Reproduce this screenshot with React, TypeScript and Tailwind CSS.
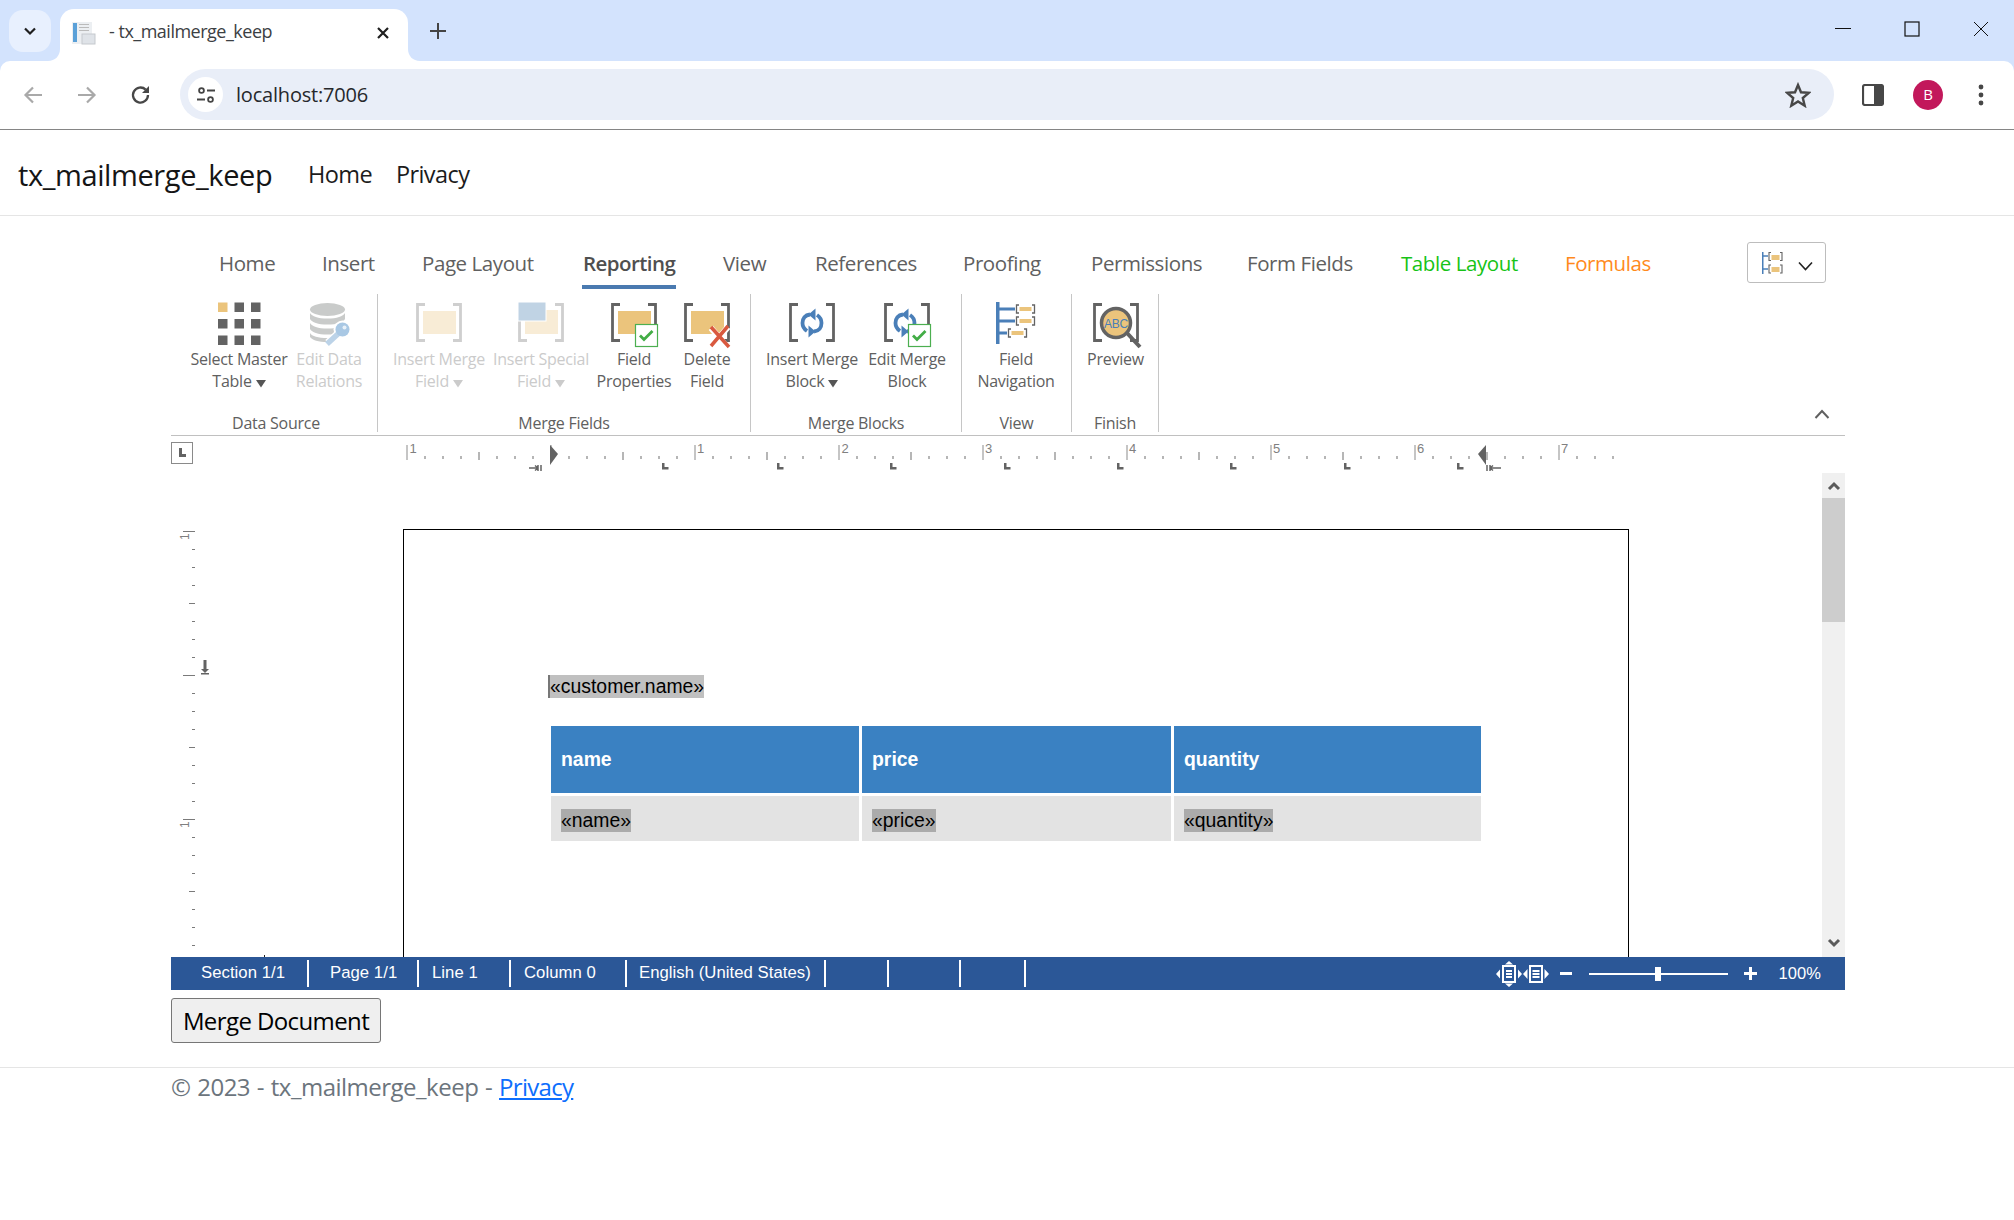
import React from "react";

const G = "#636363";
const O = "#ebc47c";
const B = "#4a7fb8";

function Brackets({ c = G, x1 = 7, x2 = 53 }: { c?: string; x1?: number; x2?: number }) {
  return (
    <g fill="none" stroke={c} strokeWidth="2.800">
      <path d={`M${x1 + 9} 2.500H${x1 + 1.500}V38.500H${x1 + 9}`} />
      <path d={`M${x2 - 9} 2.500H${x2 - 1.500}V38.500H${x2 - 9}`} />
    </g>
  );
}
function Check() {
  return (
    <g>
      <rect x="31.500" y="22.500" width="22" height="22" fill="#fff" stroke="#4caf50" strokeWidth="1.200" />
      <path d="M36 33.500l4 4 8.500-8.500" fill="none" stroke="#43ad46" strokeWidth="2.800" />
    </g>
  );
}
function Arrows({ cx = 30, cy = 21 }: { cx?: number; cy?: number }) {
  const half = (
    <g>
      <path d="M-2 -8.500C-7 -8 -9.500 -4.500 -9.500 0C-9.500 3.500 -8 6 -5 8" fill="none" stroke={B} strokeWidth="3.800" />
      <path d="M3.500 8.500L-3.500 2.500V14.500z" fill={B} />
    </g>
  );
  return (
    <g transform={`translate(${cx} ${cy})`}>
      {half}
      <g transform="rotate(180)">{half}</g>
    </g>
  );
}
function Icon({ children }: { children: React.ReactNode }) {
  return (
    <svg width="60" height="48" viewBox="0 0 60 48" className="block">
      {children}
    </svg>
  );
}

const icons: Record<string, React.ReactNode> = {
  master: (
    <Icon>
      {[0, 1, 2].map((r) =>
        [0, 1, 2].map((c) => (
          <rect key={r + "-" + c} x={9 + c * 16.500} y={0.5 + r * 16.500} width="9.500" height="9.500" fill={r === 0 && c === 0 ? O : G} />
        ))
      )}
    </Icon>
  ),
  relations: (
    <Icon>
      <g fill="#c9cbca">
        <ellipse cx="28.500" cy="7.500" rx="17.500" ry="6.500" />
        <path d="M11 11c2 3.500 8 5.500 17.500 5.500S44 14.500 46 11v6c-2 3.500-8 5.500-17.500 5.500S13 20.500 11 17z" />
        <path d="M11 21c2 3.500 8 5.500 17.500 5.500S44 24.500 46 21v6c-2 3.500-8 5.500-17.500 5.500S13 30.500 11 27z" />
        <path d="M11 31c2 3.500 8 5 17.500 5l2 0-2 4c-9 0-15.500-2-17.500-5z" />
      </g>
      <path d="M40 31L29 41" stroke="#fff" strokeWidth="8" />
      <circle cx="43.500" cy="27.500" r="9" fill="#fff" />
      <path d="M40 31L28 42" stroke="#bcd3e8" strokeWidth="5.500" />
      <circle cx="43.500" cy="27.500" r="7" fill="#a9c8e4" />
      <circle cx="45.500" cy="25.500" r="2" fill="#e8f1f9" />
    </Icon>
  ),
  insertField: (
    <Icon>
      <Brackets c="#cfcfcf" />
      <rect x="14" y="9" width="33" height="23" fill="#f8ecd6" />
    </Icon>
  ),
  insertSpecial: (
    <Icon>
      <Brackets c="#cfcfcf" />
      <rect x="14" y="8" width="33" height="24" fill="#f8ecd6" />
      <rect x="7" y="0" width="28" height="19" fill="#c0d3e4" stroke="#fff" strokeWidth="1" />
    </Icon>
  ),
  props: (
    <Icon>
      <Brackets />
      <rect x="14" y="9" width="33" height="23" fill={O} />
      <Check />
    </Icon>
  ),
  del: (
    <Icon>
      <Brackets />
      <rect x="14" y="9" width="33" height="23" fill={O} />
      <path d="M34 26l16 19M51 25L35 44" stroke="#fff" strokeWidth="6" />
      <path d="M34 25l18 20M51 24L34 44" stroke="#d9593f" strokeWidth="3.500" fill="none" />
    </Icon>
  ),
  insBlock: (
    <Icon>
      <Brackets />
      <Arrows />
    </Icon>
  ),
  editBlock: (
    <Icon>
      <Brackets />
      <Arrows cx={28} cy={21} />
      <Check />
    </Icon>
  ),
  nav: (
    <Icon>
      <rect x="10" y="0" width="3.500" height="42" fill={B} />
      {[7, 19, 31].map((y, i) => (
        <g key={y}>
          <rect x="13" y={y - 1.500} width={i === 2 ? 8 : 16} height="3" fill={B} />
          <g transform={`translate(${i === 2 ? 22 : 30} ${y})`}>
            <path d="M3 -4H0.500V4H3M16 -4h2.500V4H16" fill="none" stroke={G} strokeWidth="1.300" />
            <rect x="3.500" y="-2" width="12" height="4" fill={O} />
          </g>
        </g>
      ))}
    </Icon>
  ),
  preview: (
    <Icon>
      <Brackets />
      <path d="M41 31l13 14" stroke={G} strokeWidth="4" />
      <circle cx="30" cy="21" r="14.500" fill={O} stroke={G} strokeWidth="3.500" />
      <text x="30" y="25.500" textAnchor="middle" fontSize="12" fill={B} fontFamily="'Liberation Sans', sans-serif">ABC</text>
    </Icon>
  ),
};

function Caret({ c }: { c: string }) {
  return (
    <svg width="10" height="9" viewBox="0 0 10 9" className="inline-block ml-[4px] align-[-1px]">
      <path d="M0 1h10L5 8.500z" fill={c} />
    </svg>
  );
}

function Tool({ w, icon, l1, l2, caret, off }: { w: string; icon: string; l1: string; l2: string; caret?: boolean; off?: boolean }) {
  return (
    <div className={`${w} flex flex-col items-center pt-[8px] text-[16px] leading-[22px] tracking-[-0.25px] whitespace-nowrap ${off ? "text-[#cbcbcb]" : "text-[#606060]"}`}>
      {icons[icon]}
      <div className="mt-[-2px] text-center">{l1}</div>
      <div className="text-center">
        {l2}
        {caret && <Caret c={off ? "#cbcbcb" : "#555"} />}
      </div>
    </div>
  );
}

function Group({ w, pl, label, lc, children }: { w: string; pl: string; label: string; lc?: string; children: React.ReactNode }) {
  return (
    <div className={`${w} h-[138px] border-r-[1px] border-[#c6c6c6] flex flex-col`}>
      <div className={`flex flex-1 ${pl}`}>{children}</div>
      <div className={`text-center text-[16px] leading-[22px] tracking-[-0.25px] text-[#606060] mb-[-1px] h-[21px] ${lc ?? ""}`}>{label}</div>
    </div>
  );
}

const tabs: [string, string, string][] = [
  ["Home", "w-[103px]", "text-[#606060]"],
  ["Insert", "w-[100px]", "text-[#606060]"],
  ["Page Layout", "w-[161px]", "text-[#606060]"],
  ["Reporting", "w-[140px]", "text-[#4f4f4f] font-semibold"],
  ["View", "w-[92px]", "text-[#606060]"],
  ["References", "w-[148px]", "text-[#606060]"],
  ["Proofing", "w-[128px]", "text-[#606060]"],
  ["Permissions", "w-[156px]", "text-[#606060]"],
  ["Form Fields", "w-[154px]", "text-[#606060]"],
  ["Table Layout", "w-[164px]", "text-[#17c317]"],
  ["Formulas", "w-[182px]", "text-[#ff8a1c]"],
];

function RulerH() {
  const ticks: React.ReactNode[] = [];
  const start = 406.5 - 171;
  for (let i = 0; i <= 67; i++) {
    const x = start + i * 18;
    const major = i % 8 === 0;
    const half = i % 4 === 0;
    ticks.push(
      <rect key={i} x={x} y={major ? 9 : half ? 16 : 20} width="1" height={major ? 15 : half ? 8 : 3} fill={major ? "#8c8c8c" : "#6f6f6f"} />
    );
  }
  const nums = [
    [406.5, "1"],
    [694, "1"],
    [838.5, "2"],
    [982, "3"],
    [1126, "4"],
    [1270, "5"],
    [1414, "6"],
    [1558, "7"],
  ] as [number, string][];
  const stops = [665, 780, 893, 1007, 1120, 1233, 1347, 1460];
  return (
    <svg width="1674" height="37" viewBox="0 0 1674 37" className="block">
      <rect x="0.500" y="6.500" width="21" height="21" fill="#fff" stroke="#8a8a8a" />
      <path d="M8 12v9h7v-3h-4v-6z" fill={G} />
      {ticks}
      {nums.map(([x, t], i) => (
        <text key={i} x={x - 171 + 3} y="17" fontSize="13" fill="#808080" fontFamily="'Liberation Sans', sans-serif">{t}</text>
      ))}
      {stops.map((s) => (
        <path key={s} d={`M${s - 171 - 3} 27h2.500v4h4v2.500h-6.500z`} fill={G} />
      ))}
      <path d="M379 9l8 9-8 11z" fill={G} />
      <path d="M1315 9l-8 9 8 11z" fill={G} />
      <path d="M358 32h9M367 29v6M370 29v6M367 32l-3-2.500M367 32l-3 2.500" stroke={G} strokeWidth="1.500" fill="none" />
      <path d="M1316 29v6M1319 29v6M1319 32h11M1319 32l3-2.500M1319 32l3 2.500" stroke={G} strokeWidth="1.500" fill="none" />
    </svg>
  );
}

function RulerV() {
  const items: React.ReactNode[] = [];
  for (let i = 0; i < 24; i++) {
    const y = 531 - 473 + i * 18;
    const w = i % 8 === 0 ? 12 : i % 4 === 0 ? 6 : 3;
    items.push(<rect key={i} x={24 - w} y={y} width={w} height="1" fill="#7a7a7a" />);
  }
  return (
    <svg width="232" height="484" viewBox="0 0 232 484" className="block shrink-0">
      {items}
      {[58, 346].map((y) => (
        <text key={y} x="0" y="0" fontSize="12" fill="#808080" fontFamily="'Liberation Sans', sans-serif" transform={`translate(18 ${y + 9}) rotate(-90)`}>1</text>
      ))}
      <path d="M32.500 187h3v9h2.500l-4 4-4-4h2.500z" fill={G} />
      <rect x="30" y="200" width="8" height="1.500" fill={G} />
      <rect x="93" y="482" width="1" height="2" fill="#222" />
    </svg>
  );
}

export default function App() {
  const seg = "font-['Open_Sans',sans-serif]";
  return (
    <div className={`min-h-[1220px] bg-white ${seg} overflow-hidden`}>
      {/* tab strip */}
      <div className="h-[61px] bg-[#d3e3fd] flex items-start relative">
        <div className="ml-[9px] mt-[10px] w-[42px] h-[42px] rounded-[14px] bg-[#e8f0fe] flex items-center justify-center">
          <svg width="16" height="16" viewBox="0 0 16 16"><path d="M3 5.500l5 5 5-5" fill="none" stroke="#1f1f1f" strokeWidth="2.200" /></svg>
        </div>
        <div className="ml-[9px] mt-[9px] w-[348px] h-[52px] bg-white rounded-t-[14px] flex items-center relative">
          <svg className="absolute left-[-12px] bottom-0" width="12" height="12" viewBox="0 0 12 12"><path d="M12 0v12H0C7 12 12 7 12 0z" fill="#fff" /></svg>
          <svg className="absolute right-[-12px] bottom-0" width="12" height="12" viewBox="0 0 12 12"><path d="M0 0v12h12C5 12 0 7 0 0z" fill="#fff" /></svg>
          <svg className="ml-[12px] mt-[-5px]" width="24" height="24" viewBox="0 0 24 24">
            <rect x="0" y="1" width="20" height="22" fill="#eceff2" />
            <rect x="1" y="2" width="4" height="19" fill="#5aa0d8" />
            <rect x="7" y="3" width="10" height="1" fill="#bbb" />
            <rect x="7" y="6" width="10" height="1" fill="#bbb" />
            <rect x="7" y="9" width="10" height="1" fill="#bbb" />
            <rect x="10" y="13" width="13" height="10" fill="#dfe3e8" stroke="#c5c9ce" strokeWidth="1" />
          </svg>
          <span className="ml-[13px] mt-[-8px] text-[18px] text-[#3c4043] tracking-[-0.5px]">- tx_mailmerge_keep</span>
          <svg className="ml-auto mr-[18px] mt-[-5px]" width="14" height="14" viewBox="0 0 14 14"><path d="M2 2l10 10M12 2L2 12" stroke="#1f1f1f" strokeWidth="2.200" /></svg>
        </div>
        <svg className="ml-[21px] mt-[22px]" width="18" height="18" viewBox="0 0 18 18"><path d="M9 1v16M1 9h16" stroke="#444" strokeWidth="2" /></svg>
        <div className="ml-auto flex items-center mt-[21px] mr-[25px] gap-[53px]">
          <svg width="16" height="16" viewBox="0 0 16 16"><path d="M0 7.500h16" stroke="#111" strokeWidth="1" /></svg>
          <svg width="16" height="16" viewBox="0 0 16 16"><rect x="1" y="1" width="14" height="14" fill="none" stroke="#111" strokeWidth="1.200" /></svg>
          <svg width="16" height="16" viewBox="0 0 16 16"><path d="M1 1l14 14M15 1L1 15" stroke="#111" strokeWidth="1" /></svg>
        </div>
      </div>
      {/* toolbar */}
      <div className="bg-[#d3e3fd]">
        <div className="h-[69px] bg-white rounded-t-[10px] flex items-center border-b-[1px] border-[#858585] pb-[1px]">
          <svg className="ml-[22px]" width="22" height="22" viewBox="0 0 22 22"><path d="M20 11H4M11 3.500L3.500 11l7.500 7.500" fill="none" stroke="#a9a9a9" strokeWidth="2.200" /></svg>
          <svg className="ml-[32px]" width="22" height="22" viewBox="0 0 22 22"><path d="M2 11h16M11 3.500L18.500 11 11 18.500" fill="none" stroke="#a9a9a9" strokeWidth="2.200" /></svg>
          <svg className="ml-[32px]" width="22" height="22" viewBox="0 0 22 22"><path d="M18 11a7.500 7.500 0 1 1-2.300-5.400" fill="none" stroke="#474747" strokeWidth="2.300" /><path d="M19 2v7h-7z" fill="#474747" /></svg>
          <div className="ml-[28px] w-[1654px] h-[51px] rounded-full bg-[#e9eef8] flex items-center">
            <div className="ml-[8px] w-[35px] h-[35px] rounded-full bg-white flex items-center justify-center">
              <svg width="20" height="20" viewBox="0 0 20 20" fill="none" stroke="#444" strokeWidth="1.800"><circle cx="5.500" cy="5.500" r="2.400" /><path d="M11 5.500h8M1 14.500h8" /><circle cx="14.500" cy="14.500" r="2.400" /></svg>
            </div>
            <span className="ml-[13px] text-[20px] text-[#26282c] tracking-[-0.2px]">localhost:7006</span>
            <svg className="ml-auto mr-[23px]" width="26" height="26" viewBox="0 0 26 26"><path d="M13 3l3 7.300 7.800.6-6 5.100 1.900 7.700L13 19.500l-6.700 4.200L8.200 16l-6-5.100 7.800-.6z" fill="none" stroke="#474747" strokeWidth="2.400" /></svg>
          </div>
          <svg className="ml-[28px]" width="22" height="22" viewBox="0 0 22 22"><rect x="1" y="1" width="20" height="20" rx="2" fill="#fff" stroke="#474747" strokeWidth="2.200" /><rect x="12" y="1" width="9" height="20" fill="#474747" /></svg>
          <div className="ml-[29px] w-[30px] h-[30px] rounded-full bg-[#c2185b] text-white text-[15px] flex items-center justify-center">B</div>
          <svg className="ml-[35px]" width="6" height="22" viewBox="0 0 6 22" fill="#474747"><circle cx="3" cy="3" r="2.400" /><circle cx="3" cy="11" r="2.400" /><circle cx="3" cy="19" r="2.400" /></svg>
        </div>
      </div>
      {/* navbar */}
      <div className="h-[86px] border-b-[1px] border-[#e5e5e5] flex items-center pl-[18px] pt-[5px]">
        <span className="w-[290px] text-[29px] tracking-[-0.4px] text-[#151515]">tx_mailmerge_keep</span>
        <span className="w-[88px] text-[23.500px] tracking-[-0.6px] text-[#1c1c1c]">Home</span>
        <span className="text-[23.500px] tracking-[-0.6px] text-[#1c1c1c]">Privacy</span>
      </div>
      {/* editor container */}
      <div className="ml-[171px] w-[1674px]">
        {/* ribbon tabs */}
        <div className="h-[78px] pl-[48px] flex items-start">
          <div className="flex pt-[31px]">
            {tabs.map(([t, w, c]) => (
              <div key={t} className={`${w} text-[20.500px] leading-[33px] tracking-[-0.42px] ${c}`}>
                <span className={`inline-block pb-[5px] ${t === "Reporting" ? "border-b-[4px] border-[#4a7ab0] px-[1px] ml-[-1px] tracking-[-0.55px]" : ""}`}>{t}</span>
              </div>
            ))}
          </div>
          <div className="mt-[26px] w-[79px] h-[41px] border border-[#bdbdbd] rounded-[3px] flex items-center pl-[13px]">
            <svg width="24" height="24" viewBox="0 0 24 24">
              <rect x="1" y="1" width="1.500" height="22" fill={B} />
              <path d="M2 5h5M2 18h5" stroke={B} strokeWidth="1.300" />
              <path d="M10 1.500H8V9.500h2M19 1.500h2V9.500h-2M10 14H8V22h2M19 14h2V22h-2" fill="none" stroke={G} strokeWidth="1.100" />
              <rect x="10.500" y="4" width="8" height="5" fill={O} />
              <rect x="10.500" y="16" width="8" height="5" fill={O} />
            </svg>
            <svg className="ml-[13px] mt-[6px]" width="15" height="10" viewBox="0 0 15 10"><path d="M1 1.500l6.500 7 6.500-7" fill="none" stroke="#222" strokeWidth="1.600" /></svg>
          </div>
        </div>
        {/* ribbon */}
        <div className="h-[142px] border-b-[1.500px] border-[#c0c0c0] flex">
          <Group w="w-[207px]" pl="pl-[19px]" label="Data Source" lc="pl-[4px]">
            <Tool w="w-[98px]" icon="master" l1="Select Master" l2="Table" caret />
            <Tool w="w-[82px]" icon="relations" l1="Edit Data" l2="Relations" off />
          </Group>
          <Group w="w-[373px]" pl="pl-[11px]" label="Merge Fields">
            <Tool w="w-[100px]" icon="insertField" l1="Insert Merge" l2="Field" caret off />
            <Tool w="w-[104px]" icon="insertSpecial" l1="Insert Special" l2="Field" caret off />
            <Tool w="w-[82px]" icon="props" l1="Field" l2="Properties" />
            <Tool w="w-[64px]" icon="del" l1="Delete" l2="Field" />
          </Group>
          <Group w="w-[211px]" pl="pl-[13px]" label="Merge Blocks">
            <Tool w="w-[96px]" icon="insBlock" l1="Insert Merge" l2="Block" caret />
            <Tool w="w-[94px]" icon="editBlock" l1="Edit Merge" l2="Block" />
          </Group>
          <Group w="w-[110px]" pl="pl-[0px]" label="View">
            <Tool w="w-[108px]" icon="nav" l1="Field" l2="Navigation" />
          </Group>
          <Group w="w-[87px]" pl="pl-[1px]" label="Finish">
            <Tool w="w-[86px]" icon="preview" l1="Preview" l2="" />
          </Group>
          <svg className="ml-auto mr-[15px] mt-[115px]" width="16" height="10" viewBox="0 0 16 10"><path d="M1.500 9l6.500-7 6.500 7" fill="none" stroke="#606060" strokeWidth="2" /></svg>
        </div>
        <RulerH />
        {/* canvas */}
        <div className="h-[484px] flex overflow-hidden">
          <RulerV />
          <div className="w-[1226px] h-[900px] mt-[56px] border-[1.500px] border-black bg-white shrink-0 font-['Liberation_Sans',sans-serif]">
            <div className="ml-[144px] mt-[145px] h-[23px] flex">
              <span className="h-[23px] bg-[#c0c0c0] border-l-[2px] border-[#777] text-[19.400px] leading-[23px] text-black">«customer.name»</span>
            </div>
            <div className="ml-[147px] mt-[28px] w-[930px] grid grid-cols-[308px_309px_307px] grid-rows-[67px_45px] gap-[3px] text-[19.400px]">
              {["name", "price", "quantity"].map((t) => (
                <div key={t} className="bg-[#3a81c2] text-white font-bold pl-[10px] flex items-center">{t}</div>
              ))}
              {["«name»", "«price»", "«quantity»"].map((t) => (
                <div key={t} className="bg-[#e3e3e3] pl-[10px] pt-[10px]">
                  <span className="inline-block h-[23px] leading-[23px] bg-[#ababab] text-black">{t}</span>
                </div>
              ))}
            </div>
          </div>
          <div className="flex-1" />
          <div className="w-[23px] bg-[#f0f0f0] flex flex-col items-center shrink-0">
            <div className="h-[25px] flex items-center justify-center">
              <svg width="14" height="10" viewBox="0 0 14 10"><path d="M2 8l5-5 5 5" fill="none" stroke="#5a5a5a" strokeWidth="3" /></svg>
            </div>
            <div className="w-full h-[124px] bg-[#cdcdcd]" />
            <div className="flex-1" />
            <div className="h-[26px] flex items-center justify-center pb-[2px]">
              <svg width="14" height="10" viewBox="0 0 14 10"><path d="M2 2l5 5 5-5" fill="none" stroke="#5a5a5a" strokeWidth="3" /></svg>
            </div>
          </div>
        </div>
        {/* status bar */}
        <div className="h-[33px] bg-[#2b5797] flex items-center text-white text-[16.700px] tracking-[0.05px] font-['Liberation_Sans',sans-serif]">
          {[
            ["Section 1/1", "w-[138px] pl-[30px]"],
            ["Page 1/1", "w-[110px] pl-[21px]"],
            ["Line 1", "w-[92px] pl-[13px]"],
            ["Column 0", "w-[116px] pl-[13px]"],
            ["English (United States)", "w-[199px] pl-[12px]"],
            ["", "w-[63px]"],
            ["", "w-[72px]"],
            ["", "w-[65px]"],
          ].map(([t, c], i) => (
            <div key={i} className={`${c} h-[27px] border-r-[2px] border-white leading-[26px] whitespace-nowrap`}>{t}</div>
          ))}
          <div className="ml-auto flex items-center">
            <svg width="26" height="26" viewBox="0 0 26 26" fill="#fff">
              <path d="M13 0l4 3.500H9zM13 26l-4-3.500h8zM0 13l4-4.500v9zM26 13l-4 4.500v-9z" />
              <rect x="7" y="5" width="12" height="16" fill="none" stroke="#fff" strokeWidth="2" />
              <path d="M10 10h6M10 13h6M10 16h6" stroke="#fff" strokeWidth="2" />
            </svg>
            <svg className="ml-[1px]" width="26" height="26" viewBox="0 0 26 26" fill="#fff">
              <path d="M0 13l4.500-5v10zM26 13l-4.500 5V8z" />
              <rect x="7" y="5" width="12" height="16" fill="none" stroke="#fff" strokeWidth="2" />
              <path d="M9.500 10h7M9.500 13h7M9.500 16h7" stroke="#fff" strokeWidth="2" />
            </svg>
            <div className="ml-[11px] w-[12px] h-[3px] bg-white" />
            <div className="ml-[17px] w-[139px] h-[2px] bg-white relative">
              <div className="absolute left-[66px] top-[-6px] w-[6px] h-[14px] bg-white" />
            </div>
            <svg className="ml-[16px]" width="13" height="13" viewBox="0 0 13 13"><path d="M6.500 0v13M0 6.500h13" stroke="#fff" strokeWidth="3" /></svg>
            <span className="ml-[21px] mr-[24px] text-[16.500px] tracking-[0.1px]">100%</span>
          </div>
        </div>
        <button className={`mt-[8px] block w-[210px] h-[45px] pt-[1px] bg-[#efefef] border border-[#767676] rounded-[3px] text-[24px] tracking-[-0.6px] text-black ${seg}`}>Merge Document</button>
      </div>
      <div className="mt-[24px] border-t-[1px] border-[#e5e5e5] pl-[171px] pt-[1px] text-[24px] tracking-[-0.5px] [word-spacing:1px] text-[#6c757d] leading-[36px]">
        © 2023 - tx_mailmerge_keep - <a className="text-[#0d6efd] underline tracking-[-0.7px]" href="#">Privacy</a>
      </div>
    </div>
  );
}
